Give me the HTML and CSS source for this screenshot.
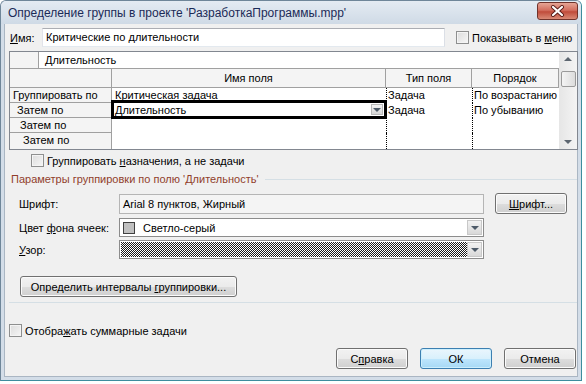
FILE: index.html
```html
<!DOCTYPE html>
<html lang="ru">

<head>
    <meta charset="UTF-8">
    <title>Определение группы</title>
    <link rel="stylesheet" href="styles.css">
</head>

<body>
    <div class="window">
        <div class="titlebar">
            <span class="title">Определение группы в проекте 'РазработкаПрограммы.mpp'</span>
            <span class="close">
                <svg width="15" height="12" viewBox="0 0 15 12">
                    <path d="M3 2 L12 10 M12 2 L3 10" stroke="#5a1d18" stroke-width="4" stroke-linecap="round" />
                    <path d="M3 2 L12 10 M12 2 L3 10" stroke="#fff" stroke-width="2.2" stroke-linecap="round" />
                </svg>
            </span>
        </div>

        <div class="client">
            <div class="name-row">
                <span class="name-label"><u>И</u>мя:</span>
                <div class="textbox name-box">Критические по длительности</div>
                <span class="check show-menu"><span class="box"></span><span>Показывать в <u>м</u>еню</span></span>
            </div>

            <div class="grid">
                <div class="grid-main">
                    <div class="edit-row">
                        <div class="edit-corner"></div>
                        <div class="edit-text">Длительность</div>
                    </div>
                    <div class="table">
                        <div class="hdr"></div>
                        <div class="hdr">Имя поля</div>
                        <div class="hdr">Тип поля</div>
                        <div class="hdr">Порядок</div>

                        <div class="rowhead">Группировать по</div>
                        <div class="cell">Критическая задача</div>
                        <div class="cell dot">Задача</div>
                        <div class="cell dot">По возрастанию</div>

                        <div class="rowhead ind1">Затем по</div>
                        <div class="cell selected">Длительность
                            <span class="sel-frame"></span>
                            <span class="cell-drop"><i class="arrow"></i></span>
                        </div>
                        <div class="cell dot">Задача</div>
                        <div class="cell dot">По убыванию</div>

                        <div class="rowhead ind2">Затем по</div>
                        <div class="cell"></div>
                        <div class="cell dot"></div>
                        <div class="cell dot"></div>

                        <div class="rowhead ind3 last">Затем по</div>
                        <div class="cell"></div>
                        <div class="cell dot"></div>
                        <div class="cell dot"></div>
                    </div>
                </div>
                <div class="vscroll">
                    <span class="sc-arrow up"></span>
                    <span class="thumb"></span>
                    <span class="sc-arrow down"></span>
                </div>
            </div>

            <div class="assign-row">
                <span class="check"><span class="box"></span><span>Группировать <u>н</u>азначения, а не задачи</span></span>
            </div>

            <div class="group-head">
                <span class="group-title">Параметры группировки по полю 'Длительность'</span>
                <span class="group-line"></span>
            </div>

            <div class="field-row font-row">
                <span class="field-label">Шрифт:</span>
                <div class="textbox readonly field-box">Arial 8 пунктов, Жирный</div>
                <span class="button font-btn"><span><u>Ш</u>рифт...</span></span>
            </div>

            <div class="field-row combo-row">
                <span class="field-label">Цвет <u>ф</u>она ячеек:</span>
                <div class="combo field-box">
                    <span class="swatch"></span>
                    <span class="combo-text">Светло-серый</span>
                    <span class="drop"><i class="arrow"></i></span>
                </div>
            </div>

            <div class="field-row combo-row pattern-row">
                <span class="field-label"><u>У</u>зор:</span>
                <div class="combo field-box">
                    <svg class="pattern" width="347" height="15">
                        <defs>
                            <pattern id="dots" width="2" height="2" patternUnits="userSpaceOnUse">
                                <rect width="2" height="2" fill="#fff" />
                                <rect width="1" height="1" fill="#1a1a1a" />
                                <rect x="1" y="1" width="1" height="1" fill="#1a1a1a" />
                            </pattern>
                        </defs>
                        <rect width="347" height="15" fill="url(#dots)" />
                    </svg>
                    <span class="drop"><i class="arrow"></i></span>
                </div>
            </div>

            <div class="intervals-row">
                <span class="button intervals-btn"><span>Определить интервалы <u>г</u>руппировки...</span></span>
            </div>

            <div class="separator"></div>

            <div class="summary-row">
                <span class="check"><span class="box"></span><span>Отобра<u>ж</u>ать суммарные задачи</span></span>
            </div>

            <div class="buttons">
                <span class="button"><span>С<u>п</u>равка</span></span>
                <span class="button default">ОК</span>
                <span class="button">Отмена</span>
            </div>
        </div>
    </div>
</body>

</html>
```

FILE: styles.css
```css
* {
    box-sizing: border-box;
}

body {
    margin: 0;
    background: #fff;
    font-family: "Liberation Sans", Arial, sans-serif;
    font-size: 11px;
    color: #000;
}

u {
    text-decoration: underline;
    text-underline-offset: 1px;
}

.window {
    width: 582px;
    height: 381px;
    display: flex;
    flex-direction: column;
    background: #d3dde8;
    border: 1px solid #6f8699;
    border-right-color: #3e8d9e;
    border-bottom-color: #3e8d9e;
    border-radius: 6px 6px 0 0;
}

.titlebar {
    height: 23px;
    display: flex;
    justify-content: space-between;
    align-items: flex-start;
    padding: 1px 3px 0 7px;
    background: linear-gradient(to bottom, #e4ebf2, #cfdae6);
    border-radius: 5px 5px 0 0;
}

.title {
    font-size: 12px;
    line-height: 22px;
    color: #1b2a57;
    white-space: nowrap;
}

.close {
    width: 41px;
    height: 18px;
    display: flex;
    align-items: center;
    justify-content: center;
    border: 1px solid #70332b;
    border-radius: 3px;
    background: linear-gradient(to bottom, #e6a595 0%, #d36f5f 45%, #c04c3b 55%, #d98a76 100%);
}

.client {
    flex: 1;
    margin: 0 3px 3px 3px;
    background: #f0f0f0;
    border: 1px solid #aab6c3;
    border-top: none;
    display: flex;
    flex-direction: column;
}

/* name row */
.name-row {
    display: flex;
    align-items: center;
    margin-top: 4px;
    height: 19px;
}

.name-label {
    width: 37px;
    padding-left: 5px;
}

.textbox {
    height: 19px;
    border: 1px solid #abadb3;
    border-left-color: #e2e3ea;
    border-right-color: #dbdfe6;
    border-bottom-color: #e3e9ef;
    background: #fff;
    padding: 1px 3px;
    line-height: 15px;
    white-space: nowrap;
}

.name-box {
    width: 403px;
}

.check {
    display: flex;
    align-items: center;
    white-space: nowrap;
}

.box {
    width: 13px;
    height: 13px;
    border: 1px solid #8e8f8f;
    background: linear-gradient(135deg, #dcdcdc, #f6f6f6);
    box-shadow: inset 0 0 0 1px #f4f4f4;
    margin-right: 3px;
}

.show-menu {
    margin-left: 11px;
}

/* grid */
.grid {
    display: flex;
    margin: 4px 0 0 4px;
    width: 569px;
    border: 1px solid #828790;
    background: #fff;
}

.grid-main {
    width: 549px;
}

.edit-row {
    display: flex;
    height: 17px;
    border-bottom: 1px solid #a0a0a0;
}

.edit-corner {
    width: 29px;
    border-right: 1px solid #a0a0a0;
    background: #f4f4f4;
}

.edit-text {
    padding-left: 6px;
    line-height: 16px;
}

.table {
    display: grid;
    grid-template-columns: 102px 274px 86px 87px;
    grid-template-rows: 19px 15px 15px 15px 16px;
}

.hdr {
    background: #f4f4f4;
    border-right: 1px solid #a0a0a0;
    border-bottom: 1px solid #a0a0a0;
    text-align: center;
    line-height: 18px;
}

.rowhead {
    background: #f4f4f4;
    border-right: 1px solid #a0a0a0;
    border-bottom: 1px solid #a0a0a0;
    padding-left: 3px;
    line-height: 14px;
    white-space: nowrap;
}

.rowhead.last {
    border-bottom: none;
}

.ind1 {
    padding-left: 7px;
}

.ind2 {
    padding-left: 10px;
}

.ind3 {
    padding-left: 13px;
}

.cell {
    padding-left: 3px;
    line-height: 14px;
    white-space: nowrap;
    overflow: hidden;
}

.cell.dot {
    border-left: 1px dotted #000;
    padding-left: 1px;
}

.selected {
    position: relative;
    overflow: visible;
    z-index: 1;
}

.sel-frame {
    position: absolute;
    left: -1px;
    right: -1px;
    top: -3px;
    bottom: -1px;
    border: 3px solid #000;
}

.cell-drop {
    position: absolute;
    right: 3px;
    top: 1px;
    width: 12px;
    height: 11px;
    background: linear-gradient(to bottom, #f3f3f3, #d6d6d6);
    border: 1px solid #b8b8b8;
    display: flex;
    align-items: center;
    justify-content: center;
}

.arrow {
    width: 0;
    height: 0;
    border-left: 4px solid transparent;
    border-right: 4px solid transparent;
    border-top: 4px solid #4d5a68;
}

.vscroll {
    width: 18px;
    display: flex;
    flex-direction: column;
    align-items: center;
    background: linear-gradient(to right, #e6e6e6, #f4f4f4);
    padding: 5px 0 5px 0;
}

.sc-arrow {
    width: 0;
    height: 0;
    border-left: 4px solid transparent;
    border-right: 4px solid transparent;
}

.sc-arrow.up {
    border-bottom: 4px solid #5d6670;
}

.sc-arrow.down {
    border-top: 4px solid #5d6670;
    margin-top: auto;
}

.thumb {
    width: 15px;
    height: 16px;
    margin-top: 10px;
    border: 1px solid #9a9a9a;
    border-radius: 2px;
    background: linear-gradient(to right, #f4f4f4, #dcdcdc);
}

/* group settings */
.assign-row {
    margin: 4px 0 0 26px;
    height: 13px;
}

.group-head {
    display: flex;
    align-items: center;
    margin: 5px 0 0 6px;
    height: 14px;
}

.group-title {
    color: #913e2c;
    white-space: nowrap;
}

.group-line {
    flex: 1;
    height: 1px;
    margin-left: 6px;
    background: #d5dfe5;
}

.field-row {
    display: flex;
    align-items: center;
}

.font-row {
    margin-top: 7px;
    height: 21px;
}

.combo-row {
    margin-top: 4px;
    height: 19px;
}

.pattern-row {
    margin-top: 3px;
}

.field-label {
    width: 114px;
    padding-left: 14px;
    white-space: nowrap;
}

.field-box {
    width: 365px;
}

.readonly {
    background: #f4f4f4;
    height: 20px;
    border-color: #b5b5b5;
    line-height: 16px;
}

.combo {
    height: 19px;
    display: flex;
    align-items: center;
    border: 1px solid #8c8c8c;
    background: #fff;
    padding: 1px;
}

.swatch {
    width: 12px;
    height: 12px;
    margin-left: 2px;
    background: #c0c0c0;
    border: 1px solid #404040;
}

.combo-text {
    margin-left: 8px;
}

.pattern {
    display: block;
}

.drop {
    width: 15px;
    height: 15px;
    margin-left: auto;
    display: flex;
    align-items: center;
    justify-content: center;
    border: 1px solid #c8c8c8;
    background: linear-gradient(to bottom, #f2f2f2, #d8d8d8);
}

.button {
    width: 72px;
    height: 21px;
    display: flex;
    align-items: center;
    justify-content: center;
    border: 1px solid #707070;
    border-radius: 3px;
    background: linear-gradient(to bottom, #f2f2f2 0%, #ebebeb 50%, #dddddd 51%, #cfcfcf 100%);
    box-shadow: inset 0 0 0 1px #fbfbfb;
    white-space: nowrap;
}

.font-btn {
    margin-left: 11px;
}

.intervals-row {
    margin: 17px 0 0 15px;
}

.intervals-btn {
    width: 217px;
}

.separator {
    height: 1px;
    margin: 5px 0 0 4px;
    background: #d5dfe5;
}

.summary-row {
    margin: 21px 0 0 4px;
    height: 13px;
}

.buttons {
    display: flex;
    justify-content: flex-end;
    gap: 12px;
    margin-top: 11px;
    padding-right: 1px;
}

.button.default {
    border-color: #3c7fb1;
    background: linear-gradient(to bottom, #eaf6fd 0%, #d9f0fc 50%, #bee6fd 51%, #a7d9f5 100%);
    box-shadow: inset 0 0 0 1px #cdeffd;
}
```
